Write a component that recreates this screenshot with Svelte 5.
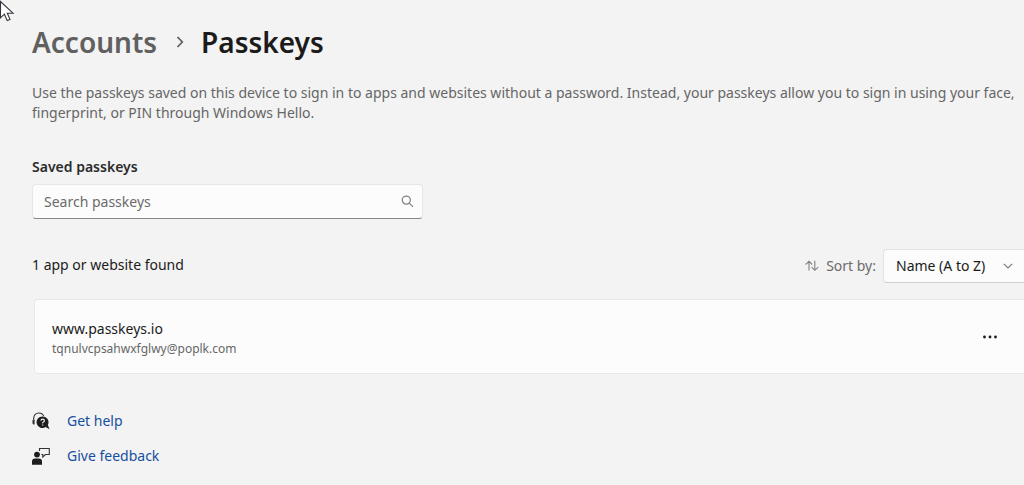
<script>
  let query = $state('');
  let sort = $state('az');
</script>

<main>
  <svg class="pointer" viewBox="0 0 15 22" aria-hidden="true">
    <path d="M.5 1.5V17.8L4.4 14.2L7.2 20.6L10 19.4L7.3 13.2H13Z" fill="#fff" stroke="#33343c" stroke-width="1.1" />
  </svg>

  <nav aria-label="Breadcrumb">
    <a class="parent" href="#accounts">Accounts</a>
    <svg class="crumb" viewBox="0 0 10 14" aria-hidden="true">
      <path d="M3.5 2L8.3 7L3.5 12" fill="none" stroke="#5c5c5c" stroke-width="1.7" />
    </svg>
    <h1>Passkeys</h1>
  </nav>

  <p class="intro">
    Use the passkeys saved on this device to sign in to apps and websites without a password. Instead, your passkeys allow you to sign in using your face, fingerprint, or PIN through Windows Hello.
  </p>

  <label class="title" for="search">Saved passkeys</label>
  <div class="search">
    <input id="search" type="text" placeholder="Search passkeys" bind:value={query} />
    <svg viewBox="0 0 14 14" aria-hidden="true">
      <g fill="none" stroke="#808080" stroke-width="1.3">
        <circle cx="5.7" cy="5.5" r="4.4" />
        <path d="M8.9 8.7L13 12.8" />
      </g>
    </svg>
  </div>

  <div class="toolbar">
    <span class="count">1 app or website found</span>
    <div class="sort">
      <svg class="arrows" viewBox="0 0 14 12" aria-hidden="true">
        <path d="M4 10.5V1.2M.7 4.5L4 1.2L7.2 4.5M9.8 .8V10.3M6.6 7.1L9.8 10.3L13.2 7.1" fill="none" stroke="#808080" stroke-width="1.1" />
      </svg>
      <label for="sort">Sort by:</label>
      <div class="picker">
        <select id="sort" bind:value={sort}>
          <option value="az">Name (A to Z)</option>
        </select>
        <svg viewBox="0 0 10 6" aria-hidden="true">
          <path d="M.8 .8L5 5L9.2 .8" fill="none" stroke="#777" stroke-width="1.1" />
        </svg>
      </div>
    </div>
  </div>

  <section class="card">
    <div class="entry">
      <span class="site">www.passkeys.io</span>
      <span class="user">tqnulvcpsahwxfglwy@poplk.com</span>
    </div>
    <button type="button" aria-label="More options">
      <svg viewBox="0 0 16 4" aria-hidden="true">
        <g fill="#1a1a1a">
          <circle cx="2.5" cy="2" r="1.4" />
          <circle cx="8" cy="2" r="1.4" />
          <circle cx="13.5" cy="2" r="1.4" />
        </g>
      </svg>
    </button>
  </section>

  <footer>
    <a href="#help">
      <svg viewBox="0 0 18 18" aria-hidden="true">
        <path d="M1.7 9V6.5C1.7 2.9 4 1 6.7 1S11 2.3 11.7 4" fill="none" stroke="#333" stroke-width="1.1" />
        <path d="M.5 8H2.6V12.6H1.4L.5 11.6Z" fill="#333" />
        <path d="M10.7 4.4A5.8 5.8 0 1 0 13.6 15L17.6 17.2L15.8 13A5.8 5.8 0 0 0 10.7 4.4Z" fill="#1d1d1d" />
        <path d="M9 8.7Q9 7.2 10.7 7.2T12.4 8.7Q12.4 9.5 11.4 10T10.7 11.4M10.7 12.4V13.6" fill="none" stroke="#f3f3f3" stroke-width="1.2" />
      </svg>
      Get help
    </a>
    <a href="#feedback">
      <svg viewBox="0 0 18 18" aria-hidden="true">
        <circle cx="5" cy="7.6" r="2.9" fill="#1d1d1d" />
        <path d="M0 17.7V14.5Q0 11.4 3.2 11.4H6.8Q10 11.4 10 14.5V17.7Z" fill="#1d1d1d" />
        <path d="M7.5 4V1.5H17.3V7.5H13.5L10.8 10V7.5H9.3" fill="none" stroke="#333" stroke-width="1.1" />
      </svg>
      Give feedback
    </a>
  </footer>
</main>

<style>
  :global(body) {
    margin: 0;
    background: #f3f3f3;
  }

  main {
    padding: 24px 0 0 32px;
    font-family: "Segoe UI", "Noto Sans", "Open Sans", sans-serif;
    font-size: 14px;
    line-height: 20px;
    color: #1b1b1b;
  }

  .pointer {
    position: absolute;
    top: 0;
    left: 0;
    width: 15px;
    height: 22px;
  }

  nav {
    display: flex;
    align-items: center;
    gap: 17px;
    font-size: 28px;
    line-height: 36px;
    font-weight: 600;
  }

  h1 {
    margin: 0;
    font: inherit;
  }

  .parent {
    color: #606060;
    text-decoration: none;
  }

  .crumb {
    width: 10px;
    height: 14px;
  }

  .intro {
    margin: 23px 0 0;
    color: #666;
  }

  .title {
    display: block;
    margin-top: 34px;
    font-weight: 600;
    color: #2b2b2b;
  }

  .search {
    display: flex;
    align-items: center;
    box-sizing: border-box;
    width: 391px;
    max-width: 100%;
    height: 35px;
    margin-top: 7px;
    padding: 0 8px 0 11px;
    border: 1px solid #e6e6e6;
    border-bottom-color: #868686;
    border-radius: 4px;
    background: #fcfcfc;
  }

  input {
    flex: 1;
    min-width: 0;
    padding: 0;
    border: 0;
    outline: 0;
    background: none;
    font: inherit;
    color: inherit;
  }

  input::placeholder {
    color: #6b6b6b;
    opacity: 1;
  }

  .search svg {
    width: 13px;
    height: 13px;
  }

  .toolbar {
    display: flex;
    align-items: center;
    justify-content: space-between;
    margin-top: 30px;
  }

  .count {
    padding-bottom: 3px;
  }

  .sort {
    display: flex;
    align-items: center;
    gap: 7px;
    color: #6b6b6b;
  }

  .arrows {
    width: 14px;
    height: 12px;
  }

  .picker {
    display: flex;
    align-items: center;
  }

  .picker svg {
    width: 10px;
    height: 6px;
    margin-left: -21px;
    margin-right: 11px;
    pointer-events: none;
  }

  select {
    appearance: none;
    box-sizing: border-box;
    width: 141px;
    height: 34px;
    padding: 0 24px 0 12px;
    border: 1px solid #e2e2e2;
    border-bottom-color: #cfcfcf;
    border-right: 0;
    border-radius: 4px 0 0 4px;
    background: #fcfcfc;
    font: inherit;
    color: #1b1b1b;
  }

  .card {
    display: flex;
    align-items: center;
    justify-content: space-between;
    margin: 16px 0 0 2px;
    padding: 15px 18px 14px 17px;
    border: 1px solid #e8e8e8;
    border-right: 0;
    border-radius: 4px 0 0 4px;
    background: #fcfcfc;
  }

  .entry {
    display: flex;
    flex-direction: column;
    padding-top: 4px;
  }

  .user {
    font-size: 12px;
    color: #666;
  }

  button {
    display: flex;
    align-items: center;
    justify-content: center;
    width: 32px;
    height: 32px;
    padding: 0;
    border: 0;
    background: none;
  }

  button svg {
    width: 16px;
    height: 4px;
  }

  footer {
    display: flex;
    flex-direction: column;
    align-items: flex-start;
    gap: 15px;
    margin-top: 37px;
  }

  footer a {
    display: flex;
    align-items: center;
    gap: 17px;
    color: #174ea0;
    text-decoration: none;
  }

  footer svg {
    width: 18px;
    height: 18px;
  }
</style>
